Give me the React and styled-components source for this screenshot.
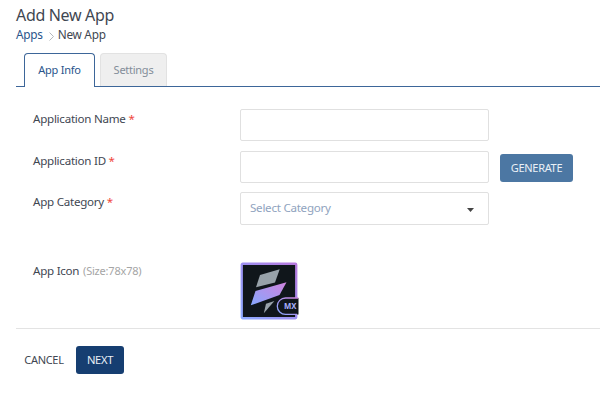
import React from 'react';
import styled, { createGlobalStyle } from 'styled-components';

const GlobalStyle = createGlobalStyle`
  * { box-sizing: border-box; }
  body {
    margin: 0;
    background: #fff;
    color: #3f4752;
    font-family: "Noto Sans", sans-serif;
    font-size: 11.6px;
    letter-spacing: -0.26px;
    overflow: hidden;
  }
`;

const Page = styled.main`
  height: 411px;
  padding: 5px 0 0 16px;
`;

const Title = styled.h1`
  margin: 0;
  font-size: 16px;
  font-weight: 400;
  letter-spacing: -0.32px;
  line-height: 21px;
`;

const Breadcrumb = styled.nav`
  display: flex;
  align-items: center;
  height: 16px;
  line-height: 16px;
  font-size: 11.8px;
`;

const Crumb = styled.span`
  color: ${(p) => (p.$link ? '#2a558b' : '#3f4752')};
`;

const Chevron = styled.svg`
  width: 5px;
  height: 9px;
  margin: 4px 4px 0 6px;
  fill: none;
  stroke: #b4b8bd;
`;

const Tabs = styled.div`
  display: flex;
  align-items: flex-end;
  gap: 5px;
  height: 45px;
  padding-left: 8px;
  border-bottom: 1px solid #3d6699;
`;

const Tab = styled.button`
  height: ${(p) => (p.$active ? 34 : 33)}px;
  width: ${(p) => (p.$active ? 71 : 67)}px;
  margin-bottom: ${(p) => (p.$active ? -1 : 0)}px;
  padding: 0 0 ${(p) => (p.$active ? 1 : 0)}px;
  border: 1px solid ${(p) => (p.$active ? '#3d6699' : '#e2e2e2')};
  border-bottom: 0;
  border-radius: 4px 4px 0 0;
  background: ${(p) => (p.$active ? '#fff' : '#efefef')};
  color: ${(p) => (p.$active ? '#2a558b' : '#838d99')};
  font: 11px/16px "Noto Sans", sans-serif;
  letter-spacing: -0.26px;
`;

const Form = styled.form`
  height: 242px;
  padding: 22px 0 0 17px;
  border-bottom: 1px solid #e3e3e3;
`;

const Field = styled.div`
  display: grid;
  grid-template-columns: 196px 249px auto;
  column-gap: 11px;
  align-items: start;
  height: ${(p) => p.$height || 42}px;
`;

const Label = styled.label`
  padding-top: ${(p) => (p.$raised ? 1 : 2)}px;
  line-height: 16px;
  white-space: nowrap;
`;

const Required = styled.span`
  color: #f0463c;
`;

const Hint = styled.span`
  margin-left: 1px;
  color: #a5a5a5;
  font-size: 11px;
  letter-spacing: -0.2px;
`;

const Input = styled.input`
  width: 249px;
  height: 32px;
  border: 1px solid #e0e0e0;
  border-radius: 2px;
  background: #fff;
  outline: none;
`;

const Select = styled.div`
  display: flex;
  align-items: center;
  justify-content: space-between;
  width: 249px;
  height: 33px;
  padding: 0 14px 2px 9px;
  border: 1px solid #e0e0e0;
  border-radius: 2px;
  color: #8fa3be;
`;

const Caret = styled.svg`
  width: 7px;
  height: 4px;
  margin-top: 4px;
  fill: #444;
`;

const Button = styled.button`
  height: 28px;
  width: ${(p) => p.$width}px;
  margin-top: ${(p) => p.$top || 0}px;
  padding: 0;
  border: 0;
  border-radius: 3px;
  background: ${(p) => p.$bg || 'transparent'};
  color: ${(p) => (p.$bg ? '#eaf0f6' : '#3f4752')};
  font: ${(p) => p.$size || 11}px/16px "Noto Sans", sans-serif;
  letter-spacing: -0.32px;
`;

const Logo = styled.svg`
  display: block;
  width: 60px;
  height: 58px;
`;

const Actions = styled.footer`
  display: flex;
  gap: 12px;
  padding: 17px 0 0 8px;
`;

const AppLogo = () => (
  <Logo viewBox="0 0 60 58">
    <defs>
      <linearGradient id="frame" x1="0" y1="1" x2="1" y2="0">
        <stop offset="0" stopColor="#8fabff" />
        <stop offset="0.5" stopColor="#9c8ff0" />
        <stop offset="1" stopColor="#b779dd" />
      </linearGradient>
      <linearGradient id="stripe" x1="0" y1="1" x2="1" y2="0">
        <stop offset="0" stopColor="#86a8ff" />
        <stop offset="1" stopColor="#cf83dd" />
      </linearGradient>
    </defs>
    <rect x="1.75" y="1.75" width="54.5" height="54.5" rx="1" fill="#10161b" stroke="url(#frame)" strokeWidth="2.3" />
    <path d="M20 13L39.7 7.3L35 20.5L16 25.3Z" fill="#98a2aa" />
    <path d="M15.5 29L46.5 20.3L39.5 33L10.8 43.3Z" fill="url(#stripe)" />
    <path d="M26 41.7L34.4 39L23.8 51.3Z" fill="#98a2aa" />
    <path d="M58.5 36H45.5a8.2 8.2 0 0 0 0 16.4H58.5Z" fill="#10161b" />
    <path d="M58.3 36H45.5a8.2 8.2 0 0 0 0 16.4H57" fill="none" stroke="url(#stripe)" strokeWidth="1.3" />
    <text x="44" y="47.2" fill="#a9b0fa" fontFamily="Noto Sans, sans-serif" fontWeight="700" fontSize="8" letterSpacing="0" textLength="12.5" lengthAdjust="spacingAndGlyphs">MX</text>
  </Logo>
);

export default function App() {
  return (
    <>
      <GlobalStyle />
      <Page>
        <Title>Add New App</Title>
        <Breadcrumb>
          <Crumb $link>Apps</Crumb>
          <Chevron viewBox="0 0 5 9"><path d="M.5.5l4 4-4 4" /></Chevron>
          <Crumb>New App</Crumb>
        </Breadcrumb>
        <Tabs>
          <Tab $active>App Info</Tab>
          <Tab>Settings</Tab>
        </Tabs>
        <Form>
          <Field>
            <Label htmlFor="name">Application Name <Required>*</Required></Label>
            <Input id="name" />
          </Field>
          <Field $height={41}>
            <Label htmlFor="appId">Application ID <Required>*</Required></Label>
            <Input id="appId" />
            <Button type="button" $width={73} $top={3} $bg="#4c77a3">GENERATE</Button>
          </Field>
          <Field $height={70}>
            <Label>App Category <Required>*</Required></Label>
            <Select>
              Select Category
              <Caret viewBox="0 0 7 4"><path d="M0 0h7L3.5 4z" /></Caret>
            </Select>
          </Field>
          <Field $height={60}>
            <Label $raised>App Icon <Hint>(Size:78x78)</Hint></Label>
            <AppLogo />
          </Field>
        </Form>
        <Actions>
          <Button $width={40}>CANCEL</Button>
          <Button $width={48} $bg="#163e71" $size={11.2}>NEXT</Button>
        </Actions>
      </Page>
    </>
  );
}
